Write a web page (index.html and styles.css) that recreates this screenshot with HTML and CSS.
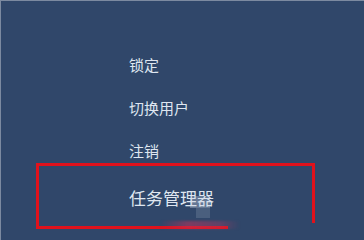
FILE: index.html
```html
<!DOCTYPE html>
<html lang="zh">
<head>
<meta charset="utf-8">
<link rel="stylesheet" href="styles.css">
</head>
<body>
<div class="screen">
  <ul class="menu">
    <li class="item">锁定</li>
    <li class="item">切换用户</li>
    <li class="item">注销</li>
    <li class="item item-big">任务管理器</li>
  </ul>
  <div class="mark-box"></div>
  <div class="mark-right"></div>
  <div class="mark-bottom"></div>
  <div class="mark-streak"></div>
  <div class="blur-a"></div>
  <div class="blur-b"></div>
</div>
</body>
</html>
```
FILE: styles.css
```css
html, body {
  margin: 0;
  padding: 0;
}
body {
  background: #30476a;
}
.screen {
  position: relative;
  width: 364px;
  height: 240px;
  overflow: hidden;
  background: #30476a;
  box-shadow: inset 1px 1px 0 #7c8aa0;
}
.menu {
  list-style: none;
  margin: 0;
  padding: 43px 0 0 129px;
  display: flex;
  flex-direction: column;
  font-family: "Noto Sans CJK SC", "Noto Sans", sans-serif;
  color: #dfe6f0;
}
.item {
  height: 43px;
  line-height: 43px;
  font-size: 15px;
}
.item-big {
  margin-top: 4px;
  font-size: 17px;
}
.mark-box {
  position: absolute;
  left: 36px;
  top: 163px;
  width: 276px;
  height: 63px;
  border-top: 3px solid #e0121c;
  border-left: 3px solid #e0121c;
  box-sizing: content-box;
}
.mark-right {
  position: absolute;
  left: 312px;
  top: 163px;
  width: 3px;
  height: 60px;
  background: #e0121c;
}
.mark-bottom {
  position: absolute;
  left: 36px;
  top: 226px;
  width: 192px;
  height: 3px;
  background: #e0121c;
}
.mark-streak {
  position: absolute;
  left: 160px;
  top: 221px;
  width: 80px;
  height: 8px;
  background: linear-gradient(90deg, rgba(200, 40, 80, 0) 0%, rgba(190, 50, 90, 0.55) 35%, rgba(180, 60, 100, 0.35) 75%, rgba(180, 60, 100, 0) 100%);
  filter: blur(1px);
}
.blur-a {
  position: absolute;
  left: 190px;
  top: 196px;
  width: 20px;
  height: 12px;
  background: rgba(200, 210, 225, 0.35);
}
.blur-b {
  position: absolute;
  left: 196px;
  top: 208px;
  width: 14px;
  height: 10px;
  background: rgba(170, 180, 200, 0.22);
}
```
